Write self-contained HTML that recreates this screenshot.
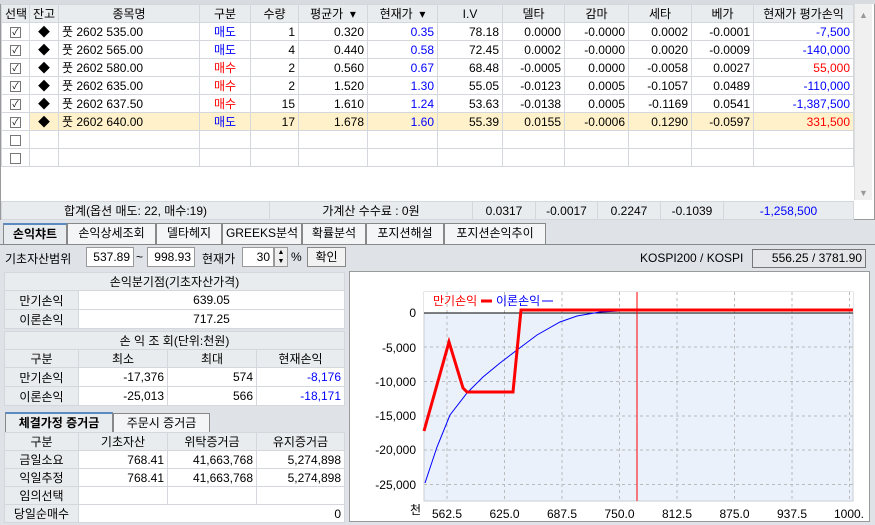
<!DOCTYPE html>
<html><head><meta charset="utf-8"><style>
*{box-sizing:border-box;margin:0;padding:0}
body{width:875px;height:525px;overflow:hidden;background:#dfe3e8;font-family:"Liberation Sans","Noto Sans CJK KR","NanumGothic",sans-serif;font-size:12px;color:#000;position:relative}
.a{position:absolute}
table{border-collapse:collapse;table-layout:fixed;position:absolute}
td{border:1px solid #d4d8dd;height:18px;padding:0 3px;white-space:nowrap;overflow:hidden;font-size:12px}
.h td{background:#e9ecef;text-align:center}
.r{text-align:right}.c{text-align:center}
.b{color:#0000ff}.rd{color:#ff0000}
.sel td{background:#fff1c9}
.cb{display:inline-block;width:11px;height:11px;border:1px solid #777;background:#fff;font-size:9px;line-height:9px;text-align:center;vertical-align:middle}
.tab{position:absolute;top:223px;height:21px;border:1px solid #888;border-bottom:none;background:#f4f5f6;text-align:center;line-height:19px;font-size:12px}
.box{position:absolute;border:1px solid #aab;background:#fff}
</style></head><body>
<div class="a" style="left:0;top:0;width:875px;height:220px;background:#fff;border:1px solid #999"></div>
<div class="a" style="left:0;top:0;width:875px;height:4px;background:#d8dce0"></div>
<table style="left:1px;top:4px;width:852px">
<colgroup><col style="width:28px"><col style="width:29px"><col style="width:141px"><col style="width:51px"><col style="width:48px"><col style="width:69px"><col style="width:70px"><col style="width:65px"><col style="width:62px"><col style="width:64px"><col style="width:63px"><col style="width:62px"><col style="width:100px"></colgroup>
<tr class="h"><td>선택</td><td>잔고</td><td>종목명</td><td>구분</td><td>수량</td><td>평균가 &nbsp;▾</td><td>현재가 &nbsp;▾</td><td>I.V</td><td>델타</td><td>감마</td><td>세타</td><td>베가</td><td>현재가 평가손익</td></tr>
<tr><td class="c"><span class="cb">✓</span></td><td class="c">◆</td><td>풋 2602 535.00</td><td class="c b">매도</td><td class="r">1</td><td class="r">0.320</td><td class="r b">0.35</td><td class="r">78.18</td><td class="r">0.0000</td><td class="r">-0.0000</td><td class="r">0.0002</td><td class="r">-0.0001</td><td class="r b">-7,500</td></tr>
<tr><td class="c"><span class="cb">✓</span></td><td class="c">◆</td><td>풋 2602 565.00</td><td class="c b">매도</td><td class="r">4</td><td class="r">0.440</td><td class="r b">0.58</td><td class="r">72.45</td><td class="r">0.0002</td><td class="r">-0.0000</td><td class="r">0.0020</td><td class="r">-0.0009</td><td class="r b">-140,000</td></tr>
<tr><td class="c"><span class="cb">✓</span></td><td class="c">◆</td><td>풋 2602 580.00</td><td class="c rd">매수</td><td class="r">2</td><td class="r">0.560</td><td class="r b">0.67</td><td class="r">68.48</td><td class="r">-0.0005</td><td class="r">0.0000</td><td class="r">-0.0058</td><td class="r">0.0027</td><td class="r rd">55,000</td></tr>
<tr><td class="c"><span class="cb">✓</span></td><td class="c">◆</td><td>풋 2602 635.00</td><td class="c rd">매수</td><td class="r">2</td><td class="r">1.520</td><td class="r b">1.30</td><td class="r">55.05</td><td class="r">-0.0123</td><td class="r">0.0005</td><td class="r">-0.1057</td><td class="r">0.0489</td><td class="r b">-110,000</td></tr>
<tr><td class="c"><span class="cb">✓</span></td><td class="c">◆</td><td>풋 2602 637.50</td><td class="c rd">매수</td><td class="r">15</td><td class="r">1.610</td><td class="r b">1.24</td><td class="r">53.63</td><td class="r">-0.0138</td><td class="r">0.0005</td><td class="r">-0.1169</td><td class="r">0.0541</td><td class="r b">-1,387,500</td></tr>
<tr class="sel"><td class="c" style="background:#fff"><span class="cb">✓</span></td><td class="c">◆</td><td>풋 2602 640.00</td><td class="c b">매도</td><td class="r">17</td><td class="r">1.678</td><td class="r b">1.60</td><td class="r">55.39</td><td class="r">0.0155</td><td class="r">-0.0006</td><td class="r">0.1290</td><td class="r">-0.0597</td><td class="r rd">331,500</td></tr>
<tr><td class="c"><span class="cb"></span></td><td></td><td></td><td></td><td></td><td></td><td></td><td></td><td></td><td></td><td></td><td></td><td></td></tr>
<tr><td class="c"><span class="cb"></span></td><td></td><td></td><td></td><td></td><td></td><td></td><td></td><td></td><td></td><td></td><td></td><td></td></tr>
</table>
<div class="a" style="left:854px;top:4px;width:18px;height:196px;background:#f0f0f0;border-left:1px solid #ddd;color:#999;font-size:9px;text-align:center"><div style="margin-top:6px">▲</div><div style="position:absolute;bottom:2px;width:100%">▼</div></div>
<table style="left:1px;top:201px;width:852px">
<colgroup><col style="width:268px"><col style="width:203px"><col style="width:63px"><col style="width:62px"><col style="width:63px"><col style="width:63px"><col style="width:130px"></colgroup>
<tr class="h"><td>합계(옵션 매도: 22, 매수:19)</td><td>가계산 수수료 : 0원</td><td class="r">0.0317</td><td class="r">-0.0017</td><td class="r">0.2247</td><td class="r">-0.1039</td><td class="r b">-1,258,500</td></tr>
</table>
<div class="tab" style="left:3px;width:64px;background:#e9ecef;font-weight:bold;border-top:2px solid #5a8ac0">손익챠트</div>
<div class="tab" style="left:67px;width:89px">손익상세조회</div>
<div class="tab" style="left:156px;width:66px">델타헤지</div>
<div class="tab" style="left:222px;width:80px">GREEKS분석</div>
<div class="tab" style="left:302px;width:64px">확률분석</div>
<div class="tab" style="left:366px;width:78px">포지션해설</div>
<div class="tab" style="left:444px;width:102px">포지션손익추이</div>
<div class="a" style="left:0;top:244px;width:875px;height:1px;background:#888"></div>
<div class="a" style="left:5px;top:250px">기초자산범위</div>
<div class="a" style="left:86px;top:247px;width:48px;height:20px;background:#fff;border:1px solid #999;text-align:right;padding:2px 3px">537.89</div>
<div class="a" style="left:136px;top:250px">~</div>
<div class="a" style="left:147px;top:247px;width:48px;height:20px;background:#fff;border:1px solid #999;text-align:right;padding:2px 3px">998.93</div>
<div class="a" style="left:202px;top:250px">현재가</div>
<div class="a" style="left:242px;top:247px;width:32px;height:20px;background:#fff;border:1px solid #999;text-align:right;padding:2px 3px">30</div>
<div class="a" style="left:274px;top:247px;width:14px;height:20px;background:#eee;border:1px solid #999;font-size:7px;line-height:9px;text-align:center">▲<br>▼</div>
<div class="a" style="left:291px;top:250px">%</div>
<div class="a" style="left:307px;top:247px;width:39px;height:20px;background:#f2f2f2;border:1px solid #888;text-align:center;line-height:18px">확인</div>
<div class="a" style="left:640px;top:251px">KOSPI200 / KOSPI</div>
<div class="a" style="left:752px;top:249px;width:114px;height:19px;border:1px solid #777;text-align:right;padding:1px 3px;background:#e4e6e9">556.25 / 3781.90</div>
<table style="left:4px;top:272px;width:341px">
<colgroup><col style="width:74px"><col></colgroup>
<tr class="h"><td colspan="2">손익분기점(기초자산가격)</td></tr>
<tr><td class="c" style="background:#e9ecef;height:19px">만기손익</td><td class="c" style="background:#fff">639.05</td></tr>
<tr><td class="c" style="background:#e9ecef;height:19px">이론손익</td><td class="c" style="background:#fff">717.25</td></tr>
</table>
<table style="left:4px;top:331px;width:341px">
<colgroup><col style="width:74px"><col style="width:89px"><col style="width:89px"><col></colgroup>
<tr class="h"><td colspan="4">손 익 조 회(단위:천원)</td></tr>
<tr class="h"><td>구분</td><td>최소</td><td>최대</td><td>현재손익</td></tr>
<tr><td class="c" style="background:#e9ecef;height:19px">만기손익</td><td class="r" style="background:#fff">-17,376</td><td class="r" style="background:#fff">574</td><td class="r b" style="background:#fff">-8,176</td></tr>
<tr><td class="c" style="background:#e9ecef;height:19px">이론손익</td><td class="r" style="background:#fff">-25,013</td><td class="r" style="background:#fff">566</td><td class="r b" style="background:#fff">-18,171</td></tr>
</table>
<div class="a" style="left:5px;top:412px;width:108px;height:21px;border:1px solid #888;border-bottom:none;border-top:2px solid #5a8ac0;background:#e9ecef;font-weight:bold;text-align:center;line-height:18px">체결가정 증거금</div>
<div class="a" style="left:113px;top:413px;width:97px;height:20px;border:1px solid #888;border-bottom:none;background:#f4f5f6;text-align:center;line-height:18px">주문시 증거금</div>
<table style="left:4px;top:432px;width:341px">
<colgroup><col style="width:74px"><col style="width:89px"><col style="width:89px"><col></colgroup>
<tr class="h"><td>구분</td><td>기초자산</td><td>위탁증거금</td><td>유지증거금</td></tr>
<tr><td class="c" style="background:#e9ecef">금일소요</td><td class="r" style="background:#fff">768.41</td><td class="r" style="background:#fff">41,663,768</td><td class="r" style="background:#fff">5,274,898</td></tr>
<tr><td class="c" style="background:#e9ecef">익일추정</td><td class="r" style="background:#fff">768.41</td><td class="r" style="background:#fff">41,663,768</td><td class="r" style="background:#fff">5,274,898</td></tr>
<tr><td class="c" style="background:#e9ecef">임의선택</td><td style="background:#fff"></td><td style="background:#fff"></td><td style="background:#fff"></td></tr>
<tr><td class="c" style="background:#e9ecef">당일순매수</td><td colspan="3" class="r" style="background:#fff">0</td></tr>
</table>
<svg class="a" style="left:349px;top:271px" width="522" height="252" viewBox="349 271 522 252">
<rect x="349.5" y="271.5" width="520" height="250" fill="#fff" stroke="#999"/>
<rect x="424" y="292" width="429" height="209" fill="#eaf1fb" stroke="#c8cdd3"/>
<rect x="424" y="292" width="429" height="21" fill="#fff"/>
<g stroke="#bbb" stroke-dasharray="3,3">
<line x1="447" y1="292" x2="447" y2="501"/><line x1="504.5" y1="292" x2="504.5" y2="501"/><line x1="562" y1="292" x2="562" y2="501"/><line x1="619.5" y1="292" x2="619.5" y2="501"/><line x1="677" y1="292" x2="677" y2="501"/><line x1="734.5" y1="292" x2="734.5" y2="501"/><line x1="792" y1="292" x2="792" y2="501"/><line x1="849.5" y1="292" x2="849.5" y2="501"/>
<line x1="424" y1="347" x2="853" y2="347"/><line x1="424" y1="381.5" x2="853" y2="381.5"/><line x1="424" y1="416" x2="853" y2="416"/><line x1="424" y1="450" x2="853" y2="450"/><line x1="424" y1="484.5" x2="853" y2="484.5"/>
</g>
<line x1="424" y1="313" x2="853" y2="313" stroke="#000"/>
<line x1="637" y1="292" x2="637" y2="501" stroke="#f00"/>
<polyline fill="none" stroke="#00f" stroke-width="1" points="425,483 437,447 450,415 467,393 483,377 500,363 517,350 537,335 560,322 577,316 600,312 620,311 853,311"/>
<polyline fill="none" stroke="#f00" stroke-width="3" points="424,431 449,342 463,388 467,392 513,392 521,310 853,310"/>
<g font-size="12" fill="#000" text-anchor="end" font-family="Liberation Sans,sans-serif">
<text x="416" y="317">0</text><text x="416" y="352">-5,000</text><text x="416" y="386">-10,000</text><text x="416" y="420">-15,000</text><text x="416" y="454">-20,000</text><text x="416" y="489">-25,000</text></g>
<g font-size="12" text-anchor="middle"><text x="447" y="518">562.5</text><text x="504.5" y="518">625.0</text><text x="562" y="518">687.5</text><text x="619.5" y="518">750.0</text><text x="677" y="518">812.5</text><text x="734.5" y="518">875.0</text><text x="792" y="518">937.5</text><text x="849" y="518">1000.</text></g>
<text x="410" y="514" font-size="12" font-family="Noto Sans CJK KR,sans-serif">천</text>
<text x="433" y="305" font-size="12" fill="#f00" font-family="Noto Sans CJK KR,sans-serif">만기손익</text>
<line x1="481" y1="301" x2="492" y2="301" stroke="#f00" stroke-width="3"/>
<text x="496" y="305" font-size="12" fill="#00f" font-family="Noto Sans CJK KR,sans-serif">이론손익</text>
<line x1="542" y1="301" x2="553" y2="301" stroke="#00f"/>
</svg>
</body></html>
